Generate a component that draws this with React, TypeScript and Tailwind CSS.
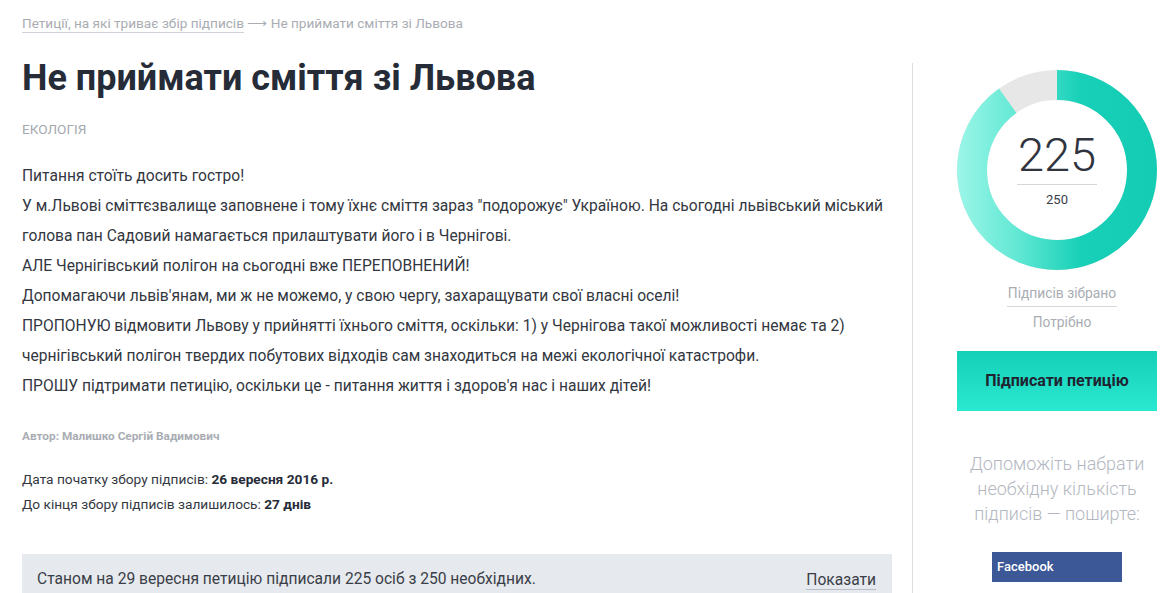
import React from "react"

const paragraphs = [
  "Питання стоїть досить гостро!",
  "У м.Львові сміттєзвалище заповнене і тому їхнє сміття зараз \"подорожує\" Україною. На сьогодні львівський міський голова пан Садовий намагається прилаштувати його і в Чернігові.",
  "АЛЕ Чернігівський полігон на сьогодні вже ПЕРЕПОВНЕНИЙ!",
  "Допомагаючи львів'янам, ми ж не можемо, у свою чергу, захаращувати свої власні оселі!",
  "ПРОПОНУЮ відмовити Львову у прийнятті їхнього сміття, оскільки: 1) у Чернігова такої можливості немає та 2) чернігівський полігон твердих побутових відходів сам знаходиться на межі екологічної катастрофи.",
  "ПРОШУ підтримати петицію, оскільки це - питання життя і здоров'я нас і наших дітей!",
]

function Donut() {
  const r = 85
  const c = 2 * Math.PI * r
  const pct = 225 / 250
  return (
    <div className="relative h-[200px] w-[200px]">
      <svg width="200" height="200" viewBox="0 0 200 200">
        <defs>
          {/* element is rotated -90deg, so its y axis runs left to right on screen */}
          <linearGradient id="ring" gradientUnits="userSpaceOnUse" x1="0" y1="0" x2="0" y2="200">
            <stop offset="0%" stopColor="#9cf6e8" />
            <stop offset="30%" stopColor="#62e8d4" />
            <stop offset="62%" stopColor="#17d0b7" />
            <stop offset="100%" stopColor="#13ccb3" />
          </linearGradient>
        </defs>
        <circle cx="100" cy="100" r={r} fill="none" stroke="#e7e7e7" strokeWidth="30" />
        <circle
          cx="100"
          cy="100"
          r={r}
          fill="none"
          stroke="url(#ring)"
          strokeWidth="30"
          strokeDasharray={`${c * pct} ${c}`}
          transform="rotate(-90 100 100)"
        />
      </svg>
      {/* count in the middle */}
      <div className="absolute inset-0 flex flex-col items-center justify-center">
        <div className="mt-[-4px] text-[47px] font-light leading-[52px] text-[#30343e]">225</div>
        <div className="mt-[3px] w-[80px] border-t border-[#d3d6db]" />
        <div className="mt-[7px] text-[13px] leading-[16px] text-[#3a3e48]">250</div>
      </div>
    </div>
  )
}

export default function App() {
  return (
    <div className="min-h-[593px] bg-white font-['Roboto',sans-serif]">
      <div className="flex pl-[22px]">
        {/* Main column */}
        <div className="w-[870px] shrink-0">
          <div className="pt-[14px] text-[13.6px] leading-[18px] text-[#a9adb3]">
            <a className="border-b border-[#cfd2d8] pb-[1px]">Петиції, на які триває збір підписів</a>
            <span> ⟶ Не приймати сміття зі Львова</span>
          </div>
          <h1 className="mt-[25px] text-[36px] font-bold leading-[42px] text-[#262b38]">Не приймати сміття зі Львова</h1>
          <div className="mt-[22px] text-[13.6px] uppercase leading-[16px] text-[#a5a9b0]">Екологія</div>
          <div className="mt-[24px] text-[15.6px] leading-[30px] text-[#33373f]">
            {paragraphs.map((p, i) => (
              <p key={i}>{p}</p>
            ))}
          </div>
          <div className="mt-[27px] text-[11.8px] font-bold leading-[16px] text-[#a9adb3]">Автор: Малишко Сергій Вадимович</div>
          <div className="mt-[23px] text-[13.7px] leading-[25px] text-[#33373f]">
            <div>
              Дата початку збору підписів: <b className="text-[#262b38]">26 вересня 2016 р.</b>
            </div>
            <div>
              До кінця збору підписів залишилось: <b className="text-[#262b38]">27 днів</b>
            </div>
          </div>
          <div className="mt-[37px] flex h-[50px] items-center justify-between bg-[#e6e9ed] pl-[15px] pr-[16px] pt-[2px] text-[15.6px] text-[#3a3e48]">
            <span>Станом на 29 вересня петицію підписали 225 осіб з 250 необхідних.</span>
            <a className="border-b border-[#b9bec7] leading-[18px]">Показати</a>
          </div>
        </div>

        {/* Sidebar */}
        <div className="ml-[20px] mt-[63px] w-[255px] shrink-0 border-l border-[#dcdee2] pb-[40px] pl-[44px]">
          <div className="mt-[7px]">
            <Donut />
          </div>
          <div className="mt-[15px] flex flex-col items-center text-[13.8px] text-[#a9adb3]">
            <div className="border-b border-[#d3d6db] px-[1px] pb-[5px] leading-[16px]">Підписів зібрано</div>
            <div className="mt-[7px] leading-[16px]">Потрібно</div>
          </div>
          <button className="mt-[21px] flex h-[60px] w-[200px] items-center justify-center bg-gradient-to-b from-[#14d0b8] to-[#2ae8d1] text-[16px] font-bold text-[#1f2430]">
            Підписати петицію
          </button>
          <p className="mt-[40px] w-[200px] text-center text-[18px] font-light leading-[25px] text-[#b3b7bf]">
            Допоможіть набрати необхідну кількість підписів — поширте:
          </p>
          <div className="mt-[26px] flex w-[200px] justify-center">
            <a className="flex h-[30px] w-[130px] items-center bg-[#3d5896] pl-[5px] text-[13px] font-medium text-white">Facebook</a>
          </div>
        </div>
      </div>
    </div>
  )
}
